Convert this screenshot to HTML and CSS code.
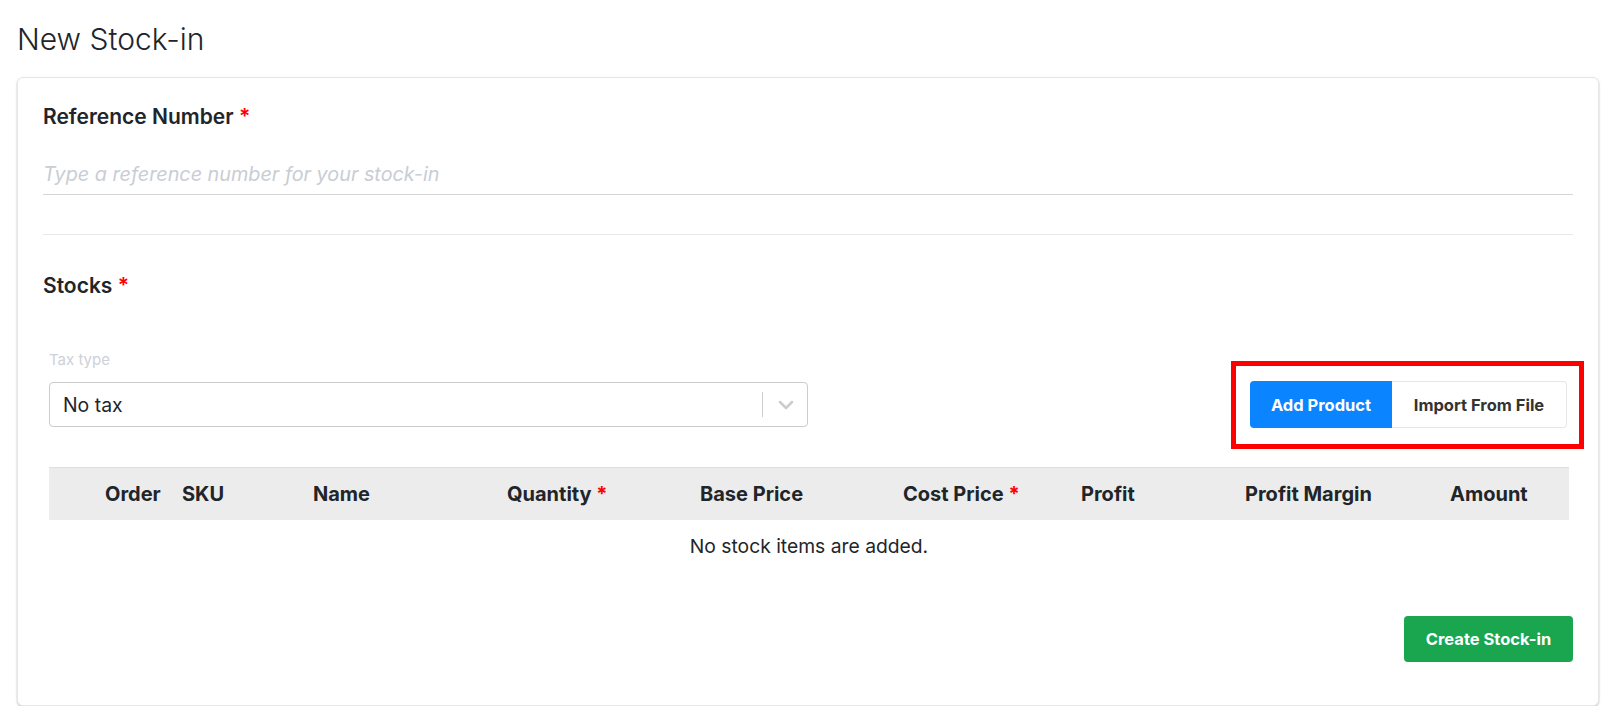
FILE: index.html
```html
<!DOCTYPE html>
<html lang="en">
<head>
    <meta charset="UTF-8">
    <meta name="viewport" content="width=device-width, initial-scale=1.0">
    <title>New Stock-in</title>
    <link rel="stylesheet" href="styles.css">
</head>
<body>
    <div id="page">
        <h1 class="page_title">New Stock-in</h1>
        <div class="card">
            <label class="field_label" for="ref">Reference Number <span class="req">*</span></label>
            <input class="ref_input" id="ref" type="text" placeholder="Type a reference number for your stock-in">

            <hr class="divider">

            <div class="field_label">Stocks <span class="req">*</span></div>

            <div class="stocks">
                <div class="toolbar">
                    <div class="tax">
                        <div class="tax_label">Tax type</div>
                        <div class="select">
                            <span class="select_value">No tax</span>
                            <span class="select_sep"></span>
                            <span class="select_arrow">
                                <svg width="16" height="10" viewBox="0 0 16 10"><path d="M2 2 L8 8 L14 2" fill="none" stroke="#cccccc" stroke-width="2.5" stroke-linecap="round" stroke-linejoin="round"/></svg>
                            </span>
                        </div>
                    </div>
                    <div class="btn_group">
                        <button class="btn btn_blue">Add Product</button>
                        <button class="btn btn_white">Import From File</button>
                    </div>
                </div>

                <table class="stock_table">
                    <thead>
                        <tr>
                            <th class="c_order">Order</th>
                            <th class="c_sku">SKU</th>
                            <th class="c_name">Name</th>
                            <th class="c_qty">Quantity <span class="req">*</span></th>
                            <th class="c_base">Base Price</th>
                            <th class="c_cost">Cost Price <span class="req">*</span></th>
                            <th class="c_profit">Profit</th>
                            <th class="c_margin">Profit Margin</th>
                            <th class="c_amount">Amount</th>
                        </tr>
                    </thead>
                    <tbody>
                        <tr>
                            <td class="empty" colspan="9">No stock items are added.</td>
                        </tr>
                    </tbody>
                </table>
            </div>

            <div class="footer">
                <button class="btn btn_green">Create Stock-in</button>
            </div>
        </div>
    </div>
</body>
</html>
```

FILE: styles.css
```css
* {
    margin: 0;
    padding: 0;
    box-sizing: border-box;
}

body {
    font-family: Inter, "Noto Sans", sans-serif;
    color: #212529;
    background-color: #fff;
}

#page {
    padding: 21px 19px 0 17px;
}

.page_title {
    font-size: 30px;
    font-weight: 300;
    line-height: 36px;
    margin-bottom: 20px;
}

.card {
    border: 1px solid #e6e6e6;
    border-radius: 6px;
    box-shadow: 0 1px 2px rgba(0, 0, 0, 0.3);
    padding: 27px 25px 43px 25px;
}

.field_label {
    display: block;
    font-size: 21px;
    font-weight: 600;
    line-height: 24px;
}

.req {
    color: #ff0000;
}

.ref_input {
    display: block;
    width: 100%;
    height: 42px;
    margin-top: 24px;
    border: none;
    border-bottom: 1px solid #d4d4d8;
    font-family: inherit;
    font-size: 19.8px;
    outline: none;
}

.ref_input::placeholder {
    color: #c9cdd4;
    font-style: italic;
}

.divider {
    border: none;
    border-top: 1px solid #e8e8e8;
    margin: 39px 0;
}

.stocks {
    margin: 0 6px;
}

.toolbar {
    display: flex;
    justify-content: space-between;
    align-items: flex-end;
    margin-top: 52px;
}

.tax {
    width: 759px;
}

.tax_label {
    font-size: 15px;
    line-height: 20px;
    color: #cdd1d8;
    margin-bottom: 12px;
}

.select {
    display: flex;
    align-items: center;
    height: 45px;
    border: 1px solid #cccccc;
    border-radius: 4px;
}

.select_value {
    flex: 1;
    padding-left: 13px;
    font-size: 19.4px;
}

.select_sep {
    width: 1px;
    height: 25px;
    background-color: #cccccc;
}

.select_arrow {
    display: flex;
    padding: 0 13px 0 15px;
}

.btn_group {
    position: relative;
    display: flex;
    margin-bottom: -1px;
}

/* red highlight frame drawn over the buttons */
.btn_group::after {
    content: "";
    position: absolute;
    top: -20px;
    right: -17px;
    bottom: -21px;
    left: -19px;
    border: 5px solid #ff0000;
}

.btn {
    font-family: inherit;
    font-size: 16.5px;
    font-weight: 700;
    height: 47px;
    border: none;
    cursor: pointer;
}

.btn_blue {
    width: 142px;
    background-color: #0a84ff;
    color: #fff;
    border-radius: 4px 0 0 4px;
}

.btn_white {
    width: 175px;
    background-color: #fff;
    color: #333;
    border: 1px solid #e6e6e6;
    border-left: none;
    border-radius: 0 4px 4px 0;
}

.stock_table {
    width: 100%;
    margin-top: 40px;
    border-collapse: collapse;
    table-layout: fixed;
}

.stock_table thead tr {
    background-color: #ececec;
    border-top: 1px solid #dedede;
}

.stock_table th {
    height: 52px;
    padding: 0;
    text-align: left;
    font-size: 20px;
    font-weight: 700;
}

.c_order { width: 133px; padding-left: 56px !important; }
.c_sku { width: 131px; }
.c_name { width: 194px; }
.c_qty { width: 193px; }
.c_base { width: 203px; }
.c_cost { width: 178px; }
.c_profit { width: 164px; }
.c_margin { width: 205px; }
.c_amount { width: 119px; }

.stock_table .empty {
    height: 52px;
    text-align: center;
    font-size: 19.3px;
}

.footer {
    display: flex;
    justify-content: flex-end;
    margin-top: 44px;
}

.btn_green {
    width: 169px;
    height: 46px;
    background-color: #19a64f;
    color: #fff;
    border-radius: 4px;
}
```
